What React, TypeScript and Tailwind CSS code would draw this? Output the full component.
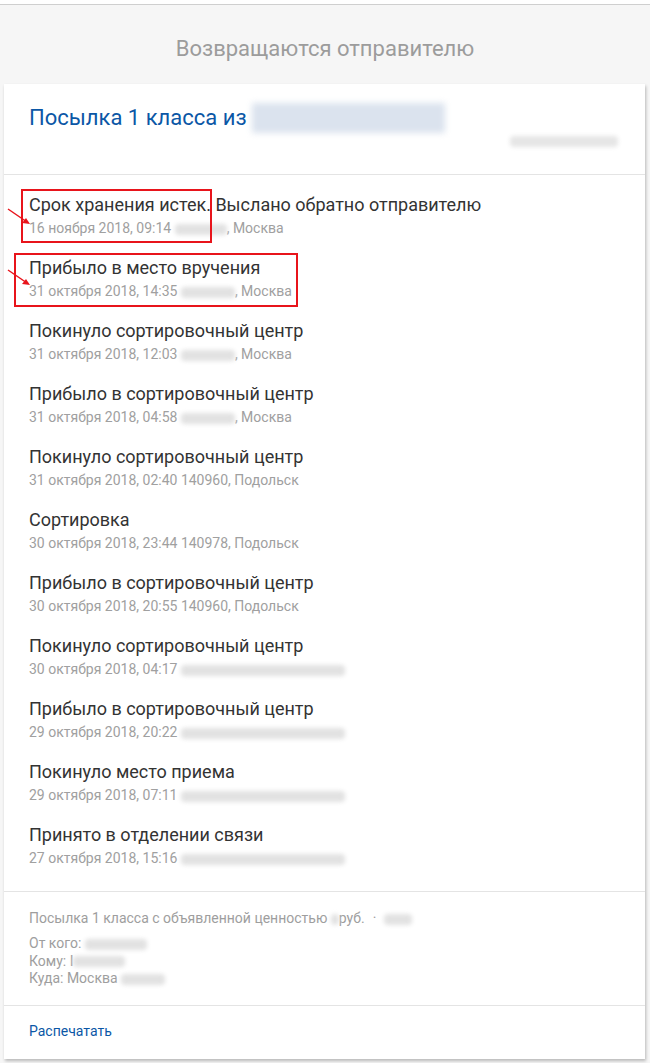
type Event = {
  title: string;
  date: string;
  blur?: number;
  place?: string;
  tail?: string;
};

const events: Event[] = [
  { title: "Срок хранения истек. Выслано обратно отправителю", date: "16 ноября 2018, 09:14", blur: 52, tail: ", Москва" },
  { title: "Прибыло в место вручения", date: "31 октября 2018, 14:35", blur: 54, tail: ", Москва" },
  { title: "Покинуло сортировочный центр", date: "31 октября 2018, 12:03", blur: 54, tail: ", Москва" },
  { title: "Прибыло в сортировочный центр", date: "31 октября 2018, 04:58", blur: 54, tail: ", Москва" },
  { title: "Покинуло сортировочный центр", date: "31 октября 2018, 02:40", place: "140960, Подольск" },
  { title: "Сортировка", date: "30 октября 2018, 23:44", place: "140978, Подольск" },
  { title: "Прибыло в сортировочный центр", date: "30 октября 2018, 20:55", place: "140960, Подольск" },
  { title: "Покинуло сортировочный центр", date: "30 октября 2018, 04:17", blur: 164 },
  { title: "Прибыло в сортировочный центр", date: "29 октября 2018, 20:22", blur: 164 },
  { title: "Покинуло место приема", date: "29 октября 2018, 07:11", blur: 164 },
  { title: "Принято в отделении связи", date: "27 октября 2018, 15:16", blur: 164 },
];

function Blur({ w, className = "" }: { w: number; className?: string }) {
  return (
    <span
      className={`inline-block h-[11px] rounded-sm bg-[#e2e2e2] blur-[2px] align-middle ${className}`}
      style={{ width: w }}
    />
  );
}

function Arrow({ className }: { className: string }) {
  return (
    <svg className={`absolute ${className}`} width="26" height="20" viewBox="0 0 26 20" fill="none">
      <line x1="1" y1="1" x2="20" y2="14" stroke="#e8141b" strokeWidth="1.5" />
      <path d="M23 16 L15 15 L19 10 Z" fill="#e8141b" />
    </svg>
  );
}

export default function App() {
  return (
    <div className="min-h-[1063px] bg-[#f6f6f6] font-['Roboto',sans-serif]">
      <div className="h-[4px] bg-white" />
      <div className="h-px bg-[#cfcfcf]" />

      <h1 className="pt-[33px] pb-[24px] text-center text-[22px] leading-[22px] text-[#9c9c9c]">
        Возвращаются отправителю
      </h1>

      <article className="ml-1 w-[641px] bg-white shadow-[1px_2px_3px_rgba(0,0,0,0.25)]">
        <header className="border-b border-[#e4e4e4] px-[25px] pt-[19px] pb-[27px]">
          <div className="flex items-center">
            <h2 className="text-[22px] leading-[28px] text-[#0b57a6]">Посылка 1 класса из</h2>
            <span className="ml-[5px] inline-block h-[30px] w-[193px] bg-[#dbe3ee] blur-[3px]" />
          </div>
          <div className="mt-[3px] flex justify-end pr-[2px]">
            <Blur w={108} className="h-[9px] bg-[#e6e6e6]" />
          </div>
        </header>

        <ul className="pt-[9px] pb-[14px]">
          {events.map((e, i) => (
            <li key={i} className="relative px-[25px] py-[9px]">
              <p className="text-[18px] leading-6 text-[#333333]">{e.title}</p>
              <p className="mt-px text-[14px] leading-5 text-[#a0a0a0]">
                {e.date} {e.place}
                {e.blur ? <Blur w={e.blur} /> : null}
                {e.tail}
              </p>
              {i === 0 && (
                <>
                  <div className="absolute left-[17px] top-[5px] h-[54px] w-[191px] border-2 border-[#e8141b]" />
                  <Arrow className="left-[3px] top-[24px]" />
                </>
              )}
              {i === 1 && (
                <>
                  <div className="absolute left-[10px] top-[6px] h-[54px] w-[284px] border-2 border-[#e8141b]" />
                  <Arrow className="left-[3px] top-[22px]" />
                </>
              )}
            </li>
          ))}
        </ul>

        <section className="border-t border-[#e4e4e4] px-[25px] pt-[16px] pb-[17px] text-[14px] text-[#9e9e9e]">
          <p className="leading-5">
            Посылка 1 класса с объявленной ценностью <Blur w={8} />руб.
            <span className="mx-[8px]">·</span>
            <Blur w={28} />
          </p>
          <div className="mt-[7px] leading-[17.5px]">
            <p>
              От кого: <Blur w={62} />
            </p>
            <p>
              Кому: I<Blur w={52} />
            </p>
            <p>
              Куда: Москва <Blur w={44} />
            </p>
          </div>
        </section>

        <footer className="border-t border-[#e4e4e4] px-[25px] pt-[13px] pb-[16px]">
          <a href="#" className="text-[14px] leading-5 text-[#0b57a6]">
            Распечатать
          </a>
        </footer>
      </article>
    </div>
  );
}
